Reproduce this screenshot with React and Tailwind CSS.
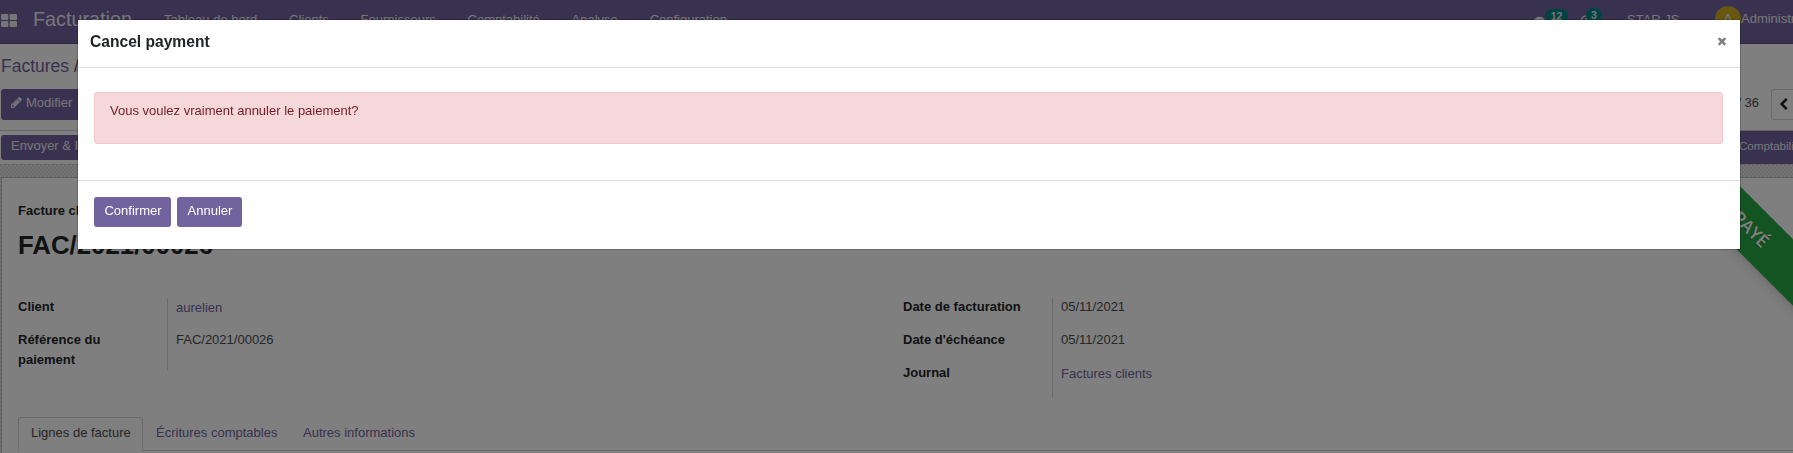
import { FaComments, FaRegClock } from "react-icons/fa";

const menus = ["Tableau de bord", "Clients", "Fournisseurs", "Comptabilité", "Analyse", "Configuration"];

function Glyph({ d, className }) {
  return (
    <svg viewBox="0 0 1792 1792" fill="currentColor" className={className}>
      <path d={d} />
    </svg>
  );
}

const PENCIL =
  "M491 1536l91-91-235-235-91 91v107h128v128h107zm523-928q0-22-22-22-10 0-17 7l-542 542q-7 7-7 17 0 22 22 22 10 0 17-7l542-542q7-7 7-17zm-54-192l416 416-832 832h-416v-416zm683 96q0 53-37 90l-166 166-416-416 166-165q36-38 90-38 53 0 91 38l235 234q37 39 37 91z";
const CHEVRON =
  "M1427 301l-531 531 531 531q19 19 19 45t-19 45l-166 166q-19 19-45 19t-45-19l-742-742q-19-19-19-45t19-45l742-742q19-19 45-19t45 19l166 166q19 19 19 45t-19 45z";
const TIMES =
  "M1490 1322q0 40-28 68l-136 136q-28 28-68 28t-68-28l-294-294-294 294q-28 28-68 28t-68-28l-136-136q-28-28-28-68t28-68l294-294-294-294q-28-28-28-68t28-68l136-136q28-28 68-28t68 28l294 294 294-294q28-28 68-28t68 28l136 136q28 28 28 68t-28 68l-294 294 294 294q28 28 28 68z";

function Navbar() {
  return (
    <header className="flex h-11 shrink-0 items-start border-b border-[#5f5287] bg-[#71639e] text-[#ececf2]">
      <svg viewBox="0 0 16 13" fill="currentColor" className="ml-px mt-[14px] h-[13px] w-4 shrink-0">
        <rect width="7.4" height="6" rx="1" />
        <rect x="8.6" width="7.4" height="6" rx="1" />
        <rect y="7" width="7.4" height="6" rx="1" />
        <rect x="8.6" y="7" width="7.4" height="6" rx="1" />
      </svg>
      <span className="ml-[16px] mt-[4px] w-[113px] shrink-0 text-[19.8px] leading-[30px]">Facturation</span>
      <nav className="mt-[10px] flex gap-[31.8px] whitespace-nowrap pl-[18px] leading-5">
        {menus.map((m) => (
          <span key={m}>{m}</span>
        ))}
      </nav>
      <div className="ml-auto flex h-full items-start whitespace-nowrap">
        <div className="mt-[9px] flex w-[46px] items-start">
          <FaComments className="mt-[6px] h-[15px] w-[15px]" />
          <span className="-ml-[4px] flex h-[15px] w-[23px] items-center justify-center rounded-full bg-[#008784] text-[10.5px] font-bold">12</span>
        </div>
        <div className="mt-[8px] flex w-[47px] items-start">
          <FaRegClock className="mt-[7px] h-[13px] w-[13px]" />
          <span className="-ml-[7px] flex h-[15px] w-[16px] items-center justify-center rounded-full bg-[#008784] text-[10.5px] font-bold">3</span>
        </div>
        <span className="mt-[10px] w-[88px] leading-5">STAR JS</span>
        <span className="mt-[6px] flex h-[26px] w-[26px] items-center justify-center rounded-full bg-[#cfae20] text-[14px]">A</span>
        <span className="mt-[9px] w-[52px] overflow-hidden leading-5">Administrator</span>
      </div>
    </header>
  );
}

function ControlPanel() {
  return (
    <section className="flex h-[87px] shrink-0 justify-between border-b border-[#ccc] bg-white">
      <div>
        <div className="mt-[9px] whitespace-nowrap pl-px text-[17.5px] leading-[26px] text-[#71639e]">
          Factures <span className="text-[#4c4c4c]">/ FAC/2021/00026</span>
        </div>
        <button className="ml-px mt-[10px] flex h-[31px] items-start gap-[3px] rounded-[3px] bg-[#71639e] pl-[9px] pr-[10px] pt-[4px] leading-5 text-[#ececf2]">
          <Glyph d={PENCIL} className="mt-[3px] h-[13px] w-[13px]" />
          Modifier
        </button>
      </div>
      <div className="mt-[45px] flex">
        <span className="mt-[4px] mr-[12px] leading-5 text-[#4c4c4c]">1 / 36</span>
        <span className="flex h-[31px] w-[22px] items-center rounded-l-[3px] border border-r-0 border-[#d5d5d5] pl-[5px] text-[#212529]">
          <Glyph d={CHEVRON} className="h-[13px] w-[13px] shrink-0" />
        </span>
      </div>
    </section>
  );
}

function StatusBar() {
  return (
    <section className="flex h-[34px] shrink-0 items-stretch justify-between border-b border-[#ccc] bg-white">
      <button className="ml-px mt-[4px] h-[25px] rounded-[3px] bg-[#71639e] px-[10px] pb-1 leading-5 text-[#ececf2]">Envoyer &amp; Imprimer</button>
      <div className="w-[63px] overflow-hidden whitespace-nowrap bg-[#71639e] pl-[9px] pt-[5px] text-[11.6px] leading-5 text-[#ececf2]">Comptabilisé</div>
    </section>
  );
}

function Ribbon() {
  return (
    <div className="absolute right-0 top-0 h-[150px] w-[150px] overflow-hidden">
      <div className="absolute left-[-37px] top-[34px] h-[47px] w-[300px] rotate-45 bg-[#28a745] pr-[16px] text-center font-['Open_Sans',sans-serif] text-[17.5px] font-semibold leading-[44px] text-white shadow-[0_5px_10px_rgba(0,0,0,0.12)] [text-shadow:0_1px_1px_rgba(0,0,0,0.3)]">
        PAYÉ
      </div>
    </div>
  );
}

function Group({ rows, height }) {
  return (
    <dl className={"grid w-[885px] grid-cols-[150px_1fr] " + height}>
      <div className="border-r border-[#d8d8d8] font-bold leading-5 text-[#212529]">
        <div className="-mt-px flex flex-col gap-[13px]">
          {rows.map(([label]) => (
            <dt key={label} className="w-[130px]">{label}</dt>
          ))}
        </div>
      </div>
      <div className="-mt-px flex flex-col gap-[13px] pl-[8px] leading-5">
        {rows.map(([label, value, link]) => (
          <dd key={label} className={link ? "pt-px -mb-px text-[#71639e]" : "text-[#4c4c4c]"}>{value}</dd>
        ))}
      </div>
    </dl>
  );
}

function Sheet() {
  return (
    <main className="flex min-h-0 flex-1 flex-col overflow-hidden bg-[repeating-conic-gradient(#ececec_0_25%,#d6d6d6_0_50%)] bg-[length:4px_4px] pl-px pt-[12px]">
      <div className="relative flex-1 border-l border-t border-[#bbb] bg-white pl-4">
        <Ribbon />
        <div className="mt-[23px] font-bold leading-5 text-[#212529]">Facture client</div>
        <h1 className="mt-[5px] text-[25.8px] font-bold leading-[39px] text-[#212529]">FAC/2021/00026</h1>
        <div className="mt-[33px] flex h-[119px]">
          <Group
            height="h-[72px]"
            rows={[["Client", "aurelien", true], ["Référence du paiement", "FAC/2021/00026"]]}
          />
          <Group
            height="h-[99px]"
            rows={[["Date de facturation", "05/11/2021"], ["Date d'échéance", "05/11/2021"], ["Journal", "Factures clients", true]]}
          />
        </div>
        <div className="flex h-[34px] items-stretch border-b border-[#d5d5d5] leading-5 text-[#71639e]">
          <span className="-mb-px w-[125px] rounded-t-[3px] border border-b-0 border-[#d5d5d5] bg-white pl-3 pt-[5px] text-[#4c4c4c]">Lignes de facture</span>
          <span className="w-[147px] pl-[13px] pt-[6px]">Écritures comptables</span>
          <span className="pl-[13px] pt-[6px]">Autres informations</span>
        </div>
      </div>
    </main>
  );
}

function Modal() {
  return (
    <div className="fixed inset-0 flex items-start bg-black/50 pl-[78px] pt-[20px]">
      <div role="dialog" className="flex h-[229px] w-[1662px] flex-col bg-white shadow-[0_0_0_1px_rgba(0,0,0,0.2)]">
        <div className="flex h-[48px] items-start justify-between border-b border-[#dee2e6] pl-[12px] pr-[12px]">
          <h4 className="mt-[10px] text-[15.6px] font-bold leading-6 text-[#212529]">Cancel payment</h4>
          <Glyph d={TIMES} className="mt-[15px] h-3 w-3 text-[#7f7f7f]" />
        </div>
        <div className="h-[112px] px-4 pt-[24px]">
          <div className="h-[52px] w-[1629px] rounded-[3px] border border-[#f5c6cb] bg-[#f6d7da] px-[15px] pt-[8px] leading-5 text-[#721c24]">
            Vous voulez vraiment annuler le paiement?
          </div>
        </div>
        <div className="flex flex-1 gap-[6px] border-t border-[#dee2e6] px-4 pt-[16px] text-white">
          <button className="h-[30px] w-[77px] rounded-[3px] bg-[#71639e] pb-[3px] pl-px">Confirmer</button>
          <button className="h-[30px] w-[65px] rounded-[3px] bg-[#71639e] pb-[3px] pl-px">Annuler</button>
        </div>
      </div>
    </div>
  );
}

export default function App() {
  return (
    <div className="flex h-[453px] w-[1793px] flex-col overflow-hidden bg-white font-['Liberation_Sans',Arial,sans-serif] text-[13px]">
      <Navbar />
      <ControlPanel />
      <StatusBar />
      <Sheet />
      <Modal />
    </div>
  );
}
